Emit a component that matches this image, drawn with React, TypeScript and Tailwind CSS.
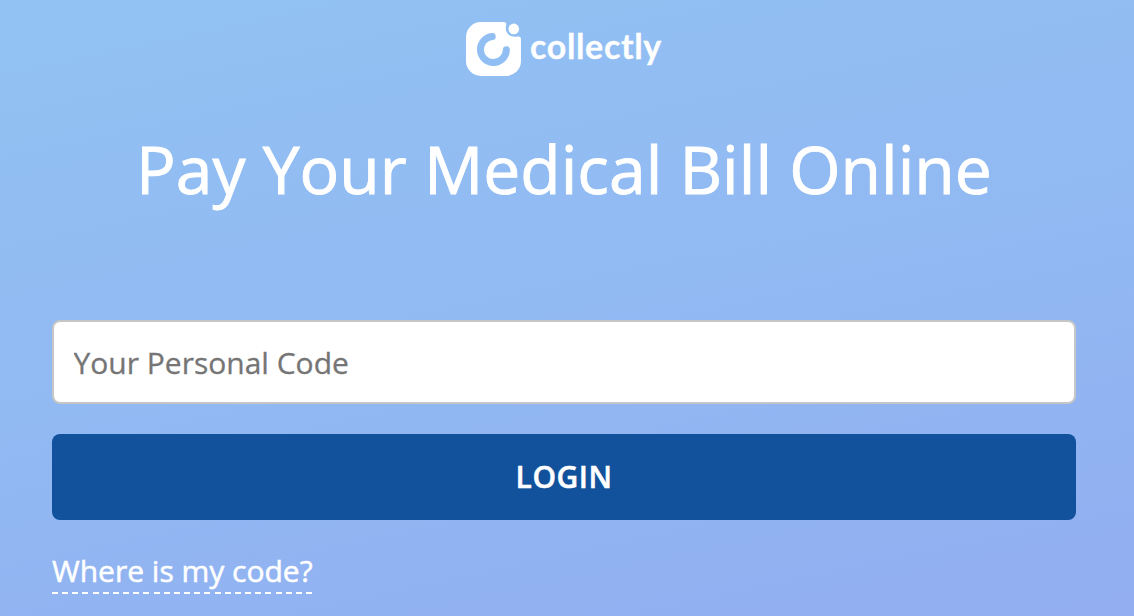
import { useState } from "react";

function LogoMark() {
  return (
    <svg width="55" height="54" viewBox="0 0 55 54" fill="none" aria-hidden="true">
      <mask id="logo-cut" maskUnits="userSpaceOnUse" x="0" y="0" width="55" height="54">
        <rect width="55" height="54" rx="15" fill="white" />
        {/* Notch around the dot */}
        <path
          d="M37 -2V0C39.8 0 40.7 1.2 40.1 3.2C38.2 10.5 43.7 16.2 51.4 14.6C53.6 14.1 55 14.8 55 17.4H58V-2Z"
          fill="black"
        />
        <path
          d="M26.2 14.5A13 13 0 1 0 40.4 27.8"
          stroke="black"
          strokeWidth="7"
          strokeLinecap="round"
        />
      </mask>
      <rect width="55" height="54" fill="white" mask="url(#logo-cut)" />
      <circle cx="47.8" cy="6.9" r="5.3" fill="white" />
    </svg>
  );
}

export default function App() {
  const [code, setCode] = useState("");

  return (
    <main className="h-screen w-full overflow-hidden bg-[linear-gradient(168deg,#92c2f3_0%,#91b9f2_50%,#92aef1_100%)] font-['Open_Sans',sans-serif] text-white">
      <div className="mx-[52px] w-[1024px] pt-[22px]">
        {/* Brand */}
        <header className="flex h-[54px] justify-center gap-[9px]">
          <LogoMark />
          <span className="w-[132px] whitespace-nowrap font-['Lato',sans-serif] text-[34px] font-bold leading-[48px] tracking-[0.65px] [-webkit-text-stroke:0.3px_white]">
            collectly
          </span>
        </header>

        <h1 className="mt-[46px] h-[94px] text-center text-[66px] leading-[92px] whitespace-nowrap [-webkit-text-stroke:0.9px_white]">
          Pay Your Medical Bill Online
        </h1>

        <form className="mt-[104px]" onSubmit={(e) => e.preventDefault()}>
          <input
            type="text"
            value={code}
            onChange={(e) => setCode(e.target.value)}
            placeholder="Your Personal Code"
            className="block h-[84px] w-full rounded-lg border-2 border-[#c6c6c6] bg-white px-[19.5px] text-[30px] text-[#333] outline-none placeholder:text-[#757575] placeholder:[-webkit-text-stroke:0.3px_#757575]"
          />
          <button
            type="submit"
            className="mt-[30px] block h-[86px] w-full rounded-lg bg-[#12529c] pb-0.5 text-[30px] font-semibold tracking-[0.5px] [-webkit-text-stroke:0.5px_white]"
          >
            LOGIN
          </button>
        </form>

        <a href="#" className="mt-[30px] inline-block text-[30px] leading-[42px] [-webkit-text-stroke:0.5px_white]">
          Where is my code?
          {/* Dashed underline, 6px on and 4px off */}
          <span className="block h-0.5 w-[260px] bg-[repeating-linear-gradient(90deg,white_0_6px,transparent_6px_10.16px)]" />
        </a>
      </div>
    </main>
  );
}
